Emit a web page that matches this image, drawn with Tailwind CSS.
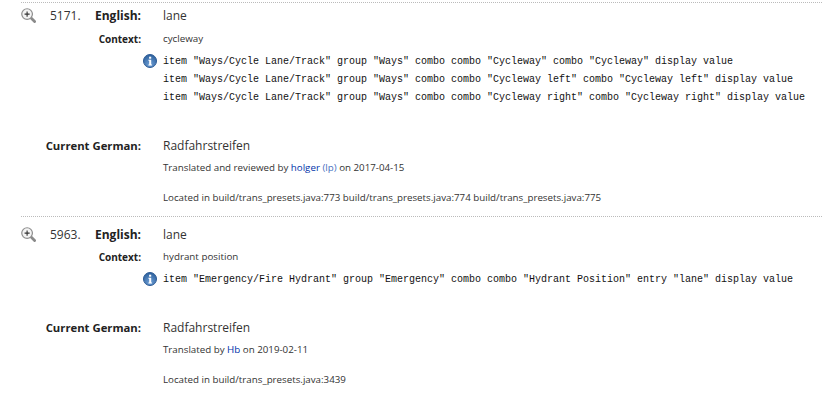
<!DOCTYPE html>
<html lang="en">
<head>
<meta charset="UTF-8">
<title>Translations</title>
<script src="https://cdn.jsdelivr.net/npm/@tailwindcss/browser@4"></script>
</head>
<body class="bg-white text-[#333] font-['Open_Sans','Noto_Sans',sans-serif] h-[404px] overflow-hidden">
<svg class="absolute w-0 h-0">
  <defs>
    <radialGradient id="infofill" cx="50%" cy="75%" r="70%">
      <stop offset="0%" stop-color="#6f9fd6"/>
      <stop offset="100%" stop-color="#2f639f"/>
    </radialGradient>
  </defs>
  <symbol id="zoom" viewBox="0 0 16 16">
    <line x1="10.5" y1="10.5" x2="14.5" y2="14.5" stroke="#8a8a8a" stroke-width="3" stroke-linecap="round"/>
    <circle cx="6.5" cy="6.5" r="5.7" fill="#f4f4f4" stroke="#8f8f8f" stroke-width="1.3"/>
    <path d="M3.8 6.5h5.4M6.5 3.8v5.4" stroke="#333" stroke-width="1.2"/>
  </symbol>
  <symbol id="info" viewBox="0 0 14 14">
    <circle cx="7" cy="7" r="6.5" fill="url(#infofill)" stroke="#2c5a94"/>
    <path d="M5.4 5.8h2.8v4.6h.8v1H5.4v-1h.8V6.8h-.8z" fill="#fff"/>
    <rect x="6.1" y="2.7" width="2.1" height="2" fill="#fff"/>
  </symbol>
</svg>

<div class="pt-[2px] pl-[21px]">
  <section class="border-t border-dotted border-[#bbb] h-[214px]">
    <div class="flex h-[27px] pb-[2px] items-center">
      <svg class="w-[15px] h-[15px] shrink-0"><use href="#zoom"/></svg>
      <span class="w-[45px] ml-[14px] text-[12px]">5171.</span>
      <span class="w-[46px] text-[12px] font-bold text-right text-[#222]">English:</span>
      <span class="ml-[22px] text-[12px]">lane</span>
    </div>
    <div class="flex h-[19px] items-center">
      <span class="w-[120px] text-[10px] font-bold text-right text-[#222]">Context:</span>
      <span class="ml-[22px] text-[9.8px]">cycleway</span>
    </div>
    <div class="flex mt-[4px] ml-[122px]">
      <svg class="w-[14px] h-[14px] mt-[1px] mr-[6px] shrink-0"><use href="#info"/></svg>
      <div class="font-['Liberation_Mono',monospace] text-[10px] leading-[18px] text-[#111] whitespace-nowrap">
        <div>item "Ways/Cycle Lane/Track" group "Ways" combo combo "Cycleway" combo "Cycleway" display value</div>
        <div>item "Ways/Cycle Lane/Track" group "Ways" combo combo "Cycleway left" combo "Cycleway left" display value</div>
        <div>item "Ways/Cycle Lane/Track" group "Ways" combo combo "Cycleway right" combo "Cycleway right" display value</div>
      </div>
    </div>
    <div class="flex mt-[29px] h-[20px] items-center">
      <span class="w-[120px] text-[11.3px] font-bold text-right text-[#222]">Current German:</span>
      <span class="ml-[22px] text-[12px]">Radfahrstreifen</span>
    </div>
    <p class="ml-[142px] mt-[5px] text-[9.75px] leading-[14px]">Translated and reviewed by <a class="text-[#0033aa]">holger</a> <a class="text-[#4a70c0]">(lp)</a> on 2017-04-15</p>
    <p class="ml-[142px] mt-[16px] text-[9.75px] leading-[14px]">Located in build/trans_presets.java:773 build/trans_presets.java:774 build/trans_presets.java:775</p>
  </section>
  <section class="border-t border-dotted border-[#bbb] pt-[4px]">
    <div class="flex h-[27px] items-center">
      <svg class="w-[15px] h-[15px] shrink-0"><use href="#zoom"/></svg>
      <span class="w-[45px] ml-[14px] text-[12px]">5963.</span>
      <span class="w-[46px] text-[12px] font-bold text-right text-[#222]">English:</span>
      <span class="ml-[22px] text-[12px]">lane</span>
    </div>
    <div class="flex h-[19px] items-center">
      <span class="w-[120px] text-[10px] font-bold text-right text-[#222]">Context:</span>
      <span class="ml-[22px] text-[9.8px]">hydrant position</span>
    </div>
    <div class="flex mt-[4px] ml-[122px]">
      <svg class="w-[14px] h-[14px] mt-[1px] mr-[6px] shrink-0"><use href="#info"/></svg>
      <div class="font-['Liberation_Mono',monospace] text-[10px] leading-[18px] text-[#111] whitespace-nowrap">item "Emergency/Fire Hydrant" group "Emergency" combo combo "Hydrant Position" entry "lane" display value</div>
    </div>
    <div class="flex mt-[29px] h-[20px] items-center">
      <span class="w-[120px] text-[11.3px] font-bold text-right text-[#222]">Current German:</span>
      <span class="ml-[22px] text-[12px]">Radfahrstreifen</span>
    </div>
    <p class="ml-[142px] mt-[5px] text-[9.75px] leading-[14px]">Translated by <a class="text-[#0033aa]">Hb</a> on 2019-02-11</p>
    <p class="ml-[142px] mt-[16px] text-[9.75px] leading-[14px]">Located in build/trans_presets.java:3439</p>
  </section>
</div>
</body>
</html>
